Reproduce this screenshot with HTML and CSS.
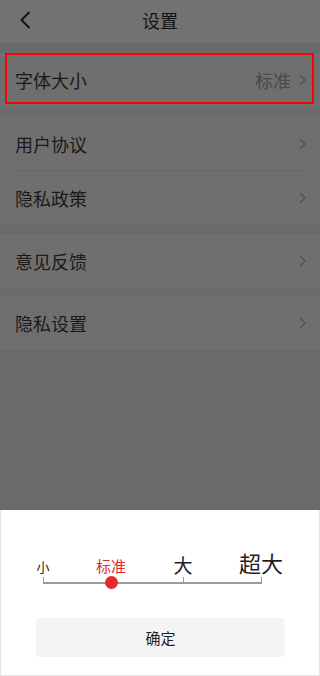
FILE: index.html
```html
<!DOCTYPE html>
<html lang="zh-CN">
<head>
<meta charset="utf-8">
<title>设置</title>
<link rel="stylesheet" href="styles.css">
</head>
<body>
<div class="screen">
  <div class="dim">
    <header class="topbar">
      <span class="back">
        <svg width="12" height="18" viewBox="0 0 12 18"><path d="M10 1.5 L2.5 9 L10 16.5" fill="none" stroke="#141414" stroke-width="2" stroke-linecap="round" stroke-linejoin="round"/></svg>
      </span>
      <h1 class="title">设置</h1>
    </header>

    <section class="group g1">
      <div class="row first">
        <span class="label">字体大小</span>
        <span class="value">标准</span>
        <svg class="chev" width="7" height="12" viewBox="0 0 7 12"><path d="M1 1 L6 6 L1 11" fill="none" stroke="#505050" stroke-width="1.2"/></svg>
        <span class="mark"></span>
      </div>
    </section>

    <section class="group g2">
      <div class="row divided">
        <span class="label">用户协议</span>
        <svg class="chev" width="7" height="12" viewBox="0 0 7 12"><path d="M1 1 L6 6 L1 11" fill="none" stroke="#505050" stroke-width="1.2"/></svg>
      </div>
      <div class="row">
        <span class="label">隐私政策</span>
        <svg class="chev" width="7" height="12" viewBox="0 0 7 12"><path d="M1 1 L6 6 L1 11" fill="none" stroke="#505050" stroke-width="1.2"/></svg>
      </div>
    </section>

    <section class="group g3">
      <div class="row">
        <span class="label">意见反馈</span>
        <svg class="chev" width="7" height="12" viewBox="0 0 7 12"><path d="M1 1 L6 6 L1 11" fill="none" stroke="#505050" stroke-width="1.2"/></svg>
      </div>
    </section>

    <section class="group g4">
      <div class="row">
        <span class="label">隐私设置</span>
        <svg class="chev" width="7" height="12" viewBox="0 0 7 12"><path d="M1 1 L6 6 L1 11" fill="none" stroke="#505050" stroke-width="1.2"/></svg>
      </div>
    </section>
  </div>

  <div class="sheet">
    <div class="slider">
      <div class="labels">
        <div class="stop"><span class="t t-s">小</span></div>
        <div class="stop s2"><span class="t t-m active">标准</span></div>
        <div class="stop s3"><span class="t t-l">大</span></div>
        <div class="stop s4"><span class="t t-xl">超大</span></div>
      </div>
      <div class="track">
        <div class="seg seg1"></div>
        <div class="seg seg2"></div>
        <div class="seg seg3"></div>
        <span class="dot"></span>
      </div>
    </div>
    <button class="confirm">确定</button>
  </div>
</div>
</body>
</html>
```

FILE: styles.css
```css
* { box-sizing: border-box; }

html, body {
  margin: 0;
  padding: 0;
  background: #ffffff;
}

body {
  font-family: "Noto Sans CJK SC", "Noto Sans", sans-serif;
}

.screen {
  width: 320px;
  height: 676px;
  display: flex;
  flex-direction: column;
  overflow: hidden;
}

.dim {
  flex: 1;
  background: #6a6a6a;
  display: flex;
  flex-direction: column;
}

.topbar {
  height: 43px;
  background: #727272;
  display: flex;
  align-items: center;
  justify-content: center;
  position: relative;
}

.back {
  position: absolute;
  left: 19px;
  top: 11px;
  width: 12px;
  height: 18px;
  display: flex;
}

.title {
  margin: 0;
  font-size: 18px;
  font-weight: 400;
  line-height: 1;
  color: #141414;
  margin-top: -3px;
}

.group {
  background: #6f6f6f;
}

.g1 { margin-top: 10px; }
.g2 { margin-top: 10px; }
.g3 { margin-top: 9px; }
.g4 { margin-top: 8px; }

.row {
  height: 54px;
  display: flex;
  align-items: center;
  padding: 0 15px;
  position: relative;
}

.row.divided::after {
  content: "";
  position: absolute;
  left: 15px;
  right: 15px;
  bottom: 0;
  height: 1px;
  background: #686868;
}

.label {
  flex: 1;
  font-size: 18px;
  line-height: 1;
  color: #1a1a1a;
}

.value {
  font-size: 18px;
  line-height: 1;
  color: #4a4a4a;
  margin-right: 8px;
}

.chev {
  display: block;
  margin-right: -1px;
}

.mark {
  position: absolute;
  left: 5px;
  right: 6px;
  top: 0;
  bottom: 3px;
  border: 2px solid #ff0000;
}

.sheet {
  height: 166px;
  background: #ffffff;
  border: 1px solid #e4e4e4;
  border-top: 0;
  padding-top: 34px;
  display: flex;
  flex-direction: column;
}

.slider {
  margin-left: 42px;
  width: 220px;
}

.labels {
  height: 30px;
  display: flex;
  align-items: flex-end;
}

.stop {
  width: 0;
  display: flex;
  justify-content: center;
  white-space: nowrap;
}

.s2 { margin-left: 68px; }
.s3 { margin-left: 72px; }
.s4 { margin-left: 78px; }

.t {
  line-height: 1;
  color: #1e1e1e;
  display: block;
}

.t-s { font-size: 13px; margin-bottom: 1px; }
.t-m { font-size: 15px; margin-bottom: 1px; }
.t-l { font-size: 19px; }
.t-xl { font-size: 22px; margin-bottom: 1px; }

.active { color: #e8272d; }

.track {
  margin-top: 3px;
  height: 8px;
  display: flex;
  position: relative;
}

.seg {
  height: 7px;
  border-left: 1px solid #9a9a9a;
  border-bottom: 2px solid #9a9a9a;
}

.seg1 { width: 68px; }
.seg2 { width: 72px; }
.seg3 { width: 79px; border-right: 1px solid #9a9a9a; }

.dot {
  position: absolute;
  left: 62px;
  top: -1px;
  width: 13px;
  height: 13px;
  border-radius: 50%;
  background: #e8272d;
}

.confirm {
  margin: 33px 0 0 35px;
  width: 249px;
  height: 39px;
  border: 0;
  border-radius: 4px;
  background: #f4f4f4;
  font-family: "Noto Sans CJK SC", "Noto Sans", sans-serif;
  font-size: 15px;
  line-height: 1;
  color: #1e1e1e;
  padding: 0;
}
```
